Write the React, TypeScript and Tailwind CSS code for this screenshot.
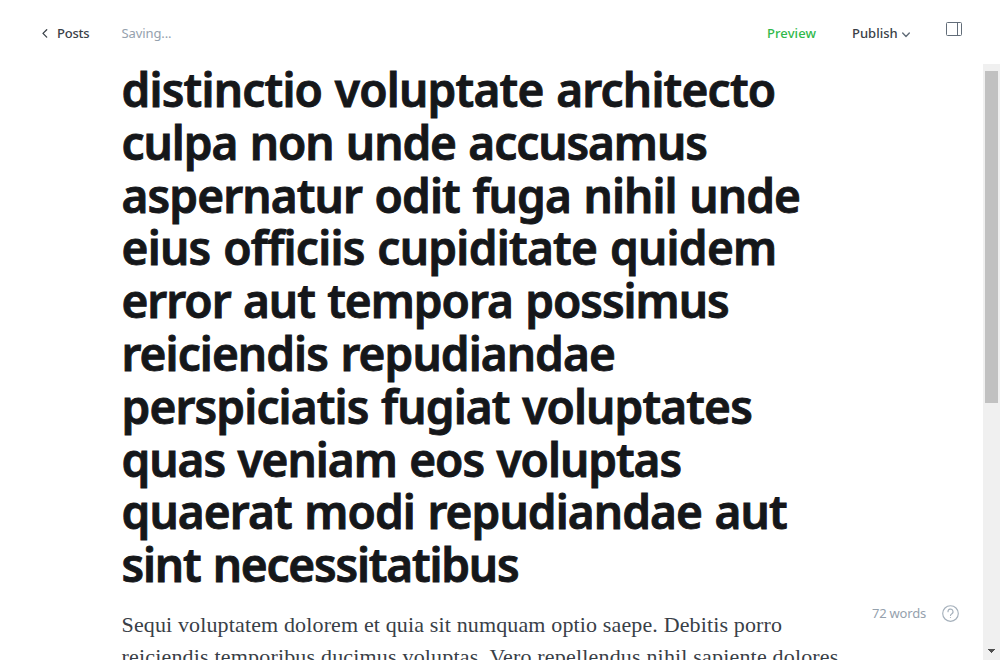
const titleLines = [
  { text: 'distinctio voluptate architecto', spacing: 'tracking-[-0.8px]' },
  { text: 'culpa non unde accusamus', spacing: 'tracking-[-1.08px]' },
  { text: 'aspernatur odit fuga nihil unde', spacing: 'tracking-[-0.9px]' },
  { text: 'eius officiis cupiditate quidem', spacing: 'tracking-[-0.74px]' },
  { text: 'error aut tempora possimus', spacing: 'tracking-[-1.04px]' },
  { text: 'reiciendis repudiandae', spacing: 'tracking-[-0.94px]' },
  { text: 'perspiciatis fugiat voluptates', spacing: 'tracking-[-0.88px]' },
  { text: 'quas veniam eos voluptas', spacing: 'tracking-[-1.04px]' },
  { text: 'quaerat modi repudiandae aut', spacing: 'tracking-[-0.92px]' },
  { text: 'sint necessitatibus', spacing: 'tracking-[-1.21px]' },
];

function Header() {
  return (
    <header className="flex h-16 shrink-0 items-start pl-[42px] text-[13px] leading-5 text-[#394047]">
      <button className="mt-[23px] flex items-center font-medium">
        <svg width="6" height="9" viewBox="0 0 6 9" fill="none" stroke="#394047" strokeWidth="1.3" strokeLinecap="round" strokeLinejoin="round">
          <path d="M4.7 .8 1 4.4l3.7 3.7" />
        </svg>
        <span className="ml-[9px] tracking-[-0.2px]">Posts</span>
      </button>
      <span className="mt-[23px] ml-[32px] tracking-[-0.1px] text-[#95a1ad]">Saving...</span>
      <div className="ml-auto flex w-[233px] items-start">
        <button className="mt-[23px] w-[85px] text-left font-medium tracking-[0.1px] text-[#30b94b]">Preview</button>
        <button className="mt-[23px] flex w-[94px] items-center font-medium">
          <span>Publish</span>
          <svg className="mt-[3px] ml-[4px]" width="8" height="6" viewBox="0 0 8 6" fill="none" stroke="#626d79" strokeWidth="1.4" strokeLinecap="round" strokeLinejoin="round">
            <path d="m.7 1 3.3 3.4L7.3 1" />
          </svg>
        </button>
        <button aria-label="Settings" className="mt-[22px]">
          <svg width="16" height="14" viewBox="0 0 16 14" fill="none" stroke="#626d79">
            <rect x=".5" y=".5" width="15" height="13" rx="1" />
            <path d="M11.5 .5v13" />
          </svg>
        </button>
      </div>
    </header>
  );
}

function Scrollbar() {
  return (
    <div className="flex w-[17px] shrink-0 flex-col items-center justify-between bg-[#f0f0f0] pt-[7px] pb-[7px]">
      <div className="h-[332px] w-[13px] bg-[#c1c1c1]" />
      <svg width="7" height="4" viewBox="0 0 7 4" fill="#505050" shapeRendering="crispEdges">
        <path d="M0 0h7L3.5 4z" />
      </svg>
    </div>
  );
}

export default function App() {
  return (
    <div className="relative flex h-[660px] w-[1000px] flex-col overflow-hidden bg-white font-['Noto_Sans',sans-serif]">
      <Header />
      <div className="flex min-h-0 flex-1">
        <main className="min-w-0 flex-1 overflow-hidden pl-[121.5px] whitespace-nowrap">
          <h1 className="-mt-px text-[46px] leading-[52.8px] font-semibold text-[#15171a] [-webkit-text-stroke:0.9px_#15171a] [word-spacing:1.5px]">
            {titleLines.map((line) => (
              <span key={line.text} className={`block w-fit ${line.spacing}`}>{line.text}</span>
            ))}
          </h1>
          <p className="mt-[18px] font-['Georgia','Liberation_Serif',serif] text-[22px] leading-8 text-[#394047]">
            <span className="block tracking-[0.14px]">Sequi voluptatem dolorem et quia sit numquam optio saepe. Debitis porro</span>
            <span className="block tracking-[0.18px]">reiciendis temporibus ducimus voluptas. Vero repellendus nihil sapiente dolores</span>
          </p>
        </main>
        <Scrollbar />
      </div>
      <div className="absolute right-[41px] bottom-[38px] flex items-center text-[13px] leading-[18px] text-[#95a1ad]">
        <span className="tracking-[-0.2px]">72 words</span>
        <svg className="ml-[16px]" width="17" height="17" viewBox="0 0 17 17" fill="none" stroke="#a5b0bb" strokeWidth="1.15" strokeLinecap="round">
          <circle cx="8.5" cy="8.5" r="7.8" />
          <path d="M6 6.7a2.5 2.5 0 1 1 3.6 2.2c-.8.4-1.1.8-1.1 1.6" />
          <circle cx="8.5" cy="12.5" r=".6" fill="#a5b0bb" stroke="none" />
        </svg>
      </div>
    </div>
  );
}
